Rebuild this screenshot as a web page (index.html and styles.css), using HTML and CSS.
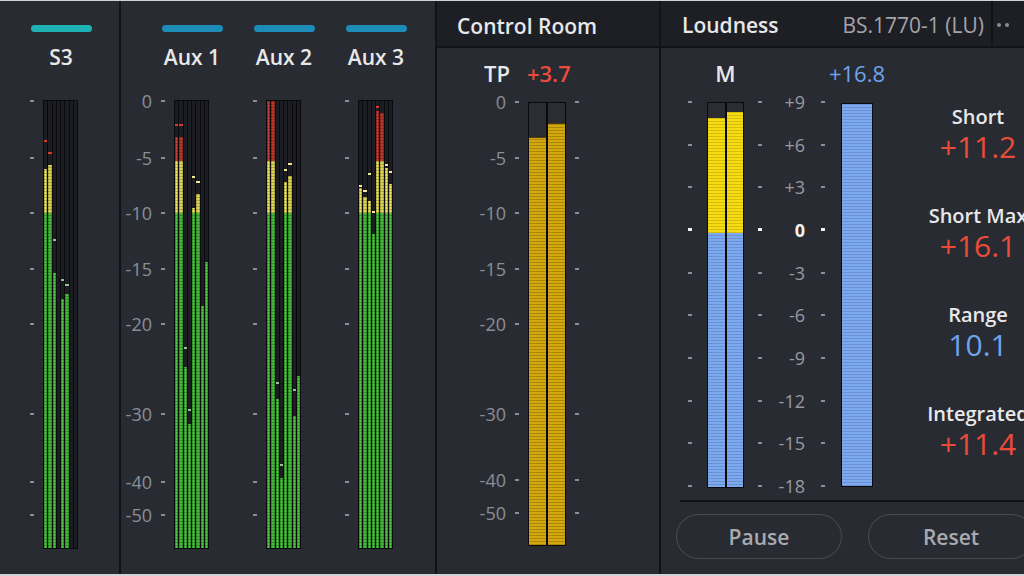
FILE: index.html
```html
<!DOCTYPE html>
<html lang="en">
<head>
<meta charset="utf-8">
<title>Meters</title>
<link rel="stylesheet" href="styles.css">
</head>
<body>
<div class="app">
  <section class="panel s3">
    <div class="strip">
      <div class="tag teal"></div>
      <div class="name">S3</div>
      <div class="mrow">
        <div class="scale">
          <div class="tk" style="top:1px"><i></i></div>
          <div class="tk" style="top:58px"><i></i></div>
          <div class="tk" style="top:113px"><i></i></div>
          <div class="tk" style="top:169px"><i></i></div>
          <div class="tk" style="top:224px"><i></i></div>
          <div class="tk" style="top:314px"><i></i></div>
          <div class="tk" style="top:382px"><i></i></div>
          <div class="tk" style="top:415px"><i></i></div>
        </div>
        <div class="meter">
          <div class="ch"><div class="off" style="height:68px"></div><b class="pk r" style="top:39px"></b></div>
          <div class="ch"><div class="off" style="height:64px"></div><b class="pk r" style="top:51px"></b></div>
          <div class="ch"><div class="off" style="height:172px"></div><b class="pk g" style="top:138px"></b></div>
          <div class="ch"><div class="off" style="height:447px"></div></div>
          <div class="ch"><div class="off" style="height:198px"></div><b class="pk g" style="top:178px"></b></div>
          <div class="ch"><div class="off" style="height:193px"></div><b class="pk g" style="top:183px"></b></div>
          <div class="ch"><div class="off" style="height:447px"></div></div>
          <div class="ch"><div class="off" style="height:447px"></div></div>
        </div>
      </div>
    </div>
  </section>

  <section class="panel aux">
    <div class="strip">
      <div class="tag blue"></div>
      <div class="name">Aux 1</div>
      <div class="mrow">
        <div class="scale">
          <div class="tk" style="top:1px"><span>0</span><i></i></div>
          <div class="tk" style="top:58px"><span>-5</span><i></i></div>
          <div class="tk" style="top:113px"><span>-10</span><i></i></div>
          <div class="tk" style="top:169px"><span>-15</span><i></i></div>
          <div class="tk" style="top:224px"><span>-20</span><i></i></div>
          <div class="tk" style="top:314px"><span>-30</span><i></i></div>
          <div class="tk" style="top:382px"><span>-40</span><i></i></div>
          <div class="tk" style="top:415px"><span>-50</span><i></i></div>
        </div>
        <div class="meter">
          <div class="ch"><div class="off" style="height:36px"></div><b class="pk r" style="top:23px"></b></div>
          <div class="ch"><div class="off" style="height:36px"></div><b class="pk r" style="top:23px"></b></div>
          <div class="ch"><div class="off" style="height:266px"></div><b class="pk g" style="top:246px"></b></div>
          <div class="ch"><div class="off" style="height:323px"></div><b class="pk g" style="top:308px"></b></div>
          <div class="ch"><div class="off" style="height:107px"></div><b class="pk y" style="top:75px"></b></div>
          <div class="ch"><div class="off" style="height:93px"></div><b class="pk y" style="top:80px"></b></div>
          <div class="ch"><div class="off" style="height:205px"></div></div>
          <div class="ch"><div class="off" style="height:161px"></div></div>
        </div>
      </div>
    </div>
    <div class="strip">
      <div class="tag blue"></div>
      <div class="name">Aux 2</div>
      <div class="mrow">
        <div class="scale">
          <div class="tk" style="top:1px"><i></i></div>
          <div class="tk" style="top:58px"><i></i></div>
          <div class="tk" style="top:113px"><i></i></div>
          <div class="tk" style="top:169px"><i></i></div>
          <div class="tk" style="top:224px"><i></i></div>
          <div class="tk" style="top:314px"><i></i></div>
          <div class="tk" style="top:382px"><i></i></div>
          <div class="tk" style="top:415px"><i></i></div>
        </div>
        <div class="meter">
          <div class="ch"><div class="off" style="height:0px"></div></div>
          <div class="ch"><div class="off" style="height:0px"></div></div>
          <div class="ch"><div class="off" style="height:298px"></div><b class="pk g" style="top:281px"></b></div>
          <div class="ch"><div class="off" style="height:377px"></div><b class="pk g" style="top:363px"></b></div>
          <div class="ch"><div class="off" style="height:81px"></div><b class="pk y" style="top:68px"></b></div>
          <div class="ch"><div class="off" style="height:75px"></div><b class="pk y" style="top:62px"></b></div>
          <div class="ch"><div class="off" style="height:315px"></div><b class="pk g" style="top:288px"></b></div>
          <div class="ch"><div class="off" style="height:275px"></div></div>
        </div>
      </div>
    </div>
    <div class="strip">
      <div class="tag blue"></div>
      <div class="name">Aux 3</div>
      <div class="mrow">
        <div class="scale">
          <div class="tk" style="top:1px"><i></i></div>
          <div class="tk" style="top:58px"><i></i></div>
          <div class="tk" style="top:113px"><i></i></div>
          <div class="tk" style="top:169px"><i></i></div>
          <div class="tk" style="top:224px"><i></i></div>
          <div class="tk" style="top:314px"><i></i></div>
          <div class="tk" style="top:382px"><i></i></div>
          <div class="tk" style="top:415px"><i></i></div>
        </div>
        <div class="meter">
          <div class="ch"><div class="off" style="height:87px"></div><b class="pk y" style="top:84px"></b></div>
          <div class="ch"><div class="off" style="height:96px"></div><b class="pk y" style="top:89px"></b></div>
          <div class="ch"><div class="off" style="height:100px"></div><b class="pk y" style="top:72px"></b></div>
          <div class="ch"><div class="off" style="height:133px"></div><b class="pk y" style="top:110px"></b></div>
          <div class="ch"><div class="off" style="height:10px"></div><b class="pk r" style="top:5px"></b></div>
          <div class="ch"><div class="off" style="height:12px"></div></div>
          <div class="ch"><div class="off" style="height:67px"></div><b class="pk y" style="top:63px"></b></div>
          <div class="ch"><div class="off" style="height:83px"></div><b class="pk y" style="top:70px"></b></div>
        </div>
      </div>
    </div>
  </section>

  <section class="panel control">
    <header class="phead">Control Room</header>
    <div class="tprow"><span>TP</span><span class="red">+3.7</span></div>
    <div class="crow">
      <div class="scale cscale">
        <div class="tk" style="top:0px"><span>0</span><i></i></div>
        <div class="tk" style="top:56px"><span>-5</span><i></i></div>
        <div class="tk" style="top:111px"><span>-10</span><i></i></div>
        <div class="tk" style="top:167px"><span>-15</span><i></i></div>
        <div class="tk" style="top:222px"><span>-20</span><i></i></div>
        <div class="tk" style="top:312px"><span>-30</span><i></i></div>
        <div class="tk" style="top:378px"><span>-40</span><i></i></div>
        <div class="tk" style="top:411px"><span>-50</span><i></i></div>
      </div>
      <div class="cmeter">
        <div class="cch"><div class="off" style="height:35px"></div></div>
        <div class="cch"><div class="off" style="height:21px"></div></div>
      </div>
      <div class="scale cscale rs">
        <div class="tk" style="top:0px"><i></i></div>
        <div class="tk" style="top:56px"><i></i></div>
        <div class="tk" style="top:111px"><i></i></div>
        <div class="tk" style="top:167px"><i></i></div>
        <div class="tk" style="top:222px"><i></i></div>
        <div class="tk" style="top:312px"><i></i></div>
        <div class="tk" style="top:378px"><i></i></div>
        <div class="tk" style="top:411px"><i></i></div>
      </div>
    </div>
  </section>

  <section class="panel loud">
    <header class="lhead">
      <span class="t">Loudness</span>
      <span class="sub">BS.1770-1 (LU)</span>
      <span class="more"><i></i><i></i></span>
    </header>
    <div class="lbody">
      <div class="ltickcol">
        <div class="lrows">
          <div class="lrow"><i></i></div>
          <div class="lrow"><i></i></div>
          <div class="lrow"><i></i></div>
          <div class="lrow zero"><i></i></div>
          <div class="lrow"><i></i></div>
          <div class="lrow"><i></i></div>
          <div class="lrow"><i></i></div>
          <div class="lrow"><i></i></div>
          <div class="lrow"><i></i></div>
          <div class="lrow"><i></i></div>
        </div>
      </div>
      <div class="lmcol">
        <div class="ltop"><span>M</span></div>
        <div class="mmeter">
          <div class="mch"><div class="off" style="height:15px"></div></div>
          <div class="mch"><div class="off" style="height:9px"></div></div>
        </div>
      </div>
      <div class="lscale">
        <div class="lrows">
          <div class="lrow"><i></i><span>+9</span><i></i></div>
          <div class="lrow"><i></i><span>+6</span><i></i></div>
          <div class="lrow"><i></i><span>+3</span><i></i></div>
          <div class="lrow zero"><i></i><span>0</span><i></i></div>
          <div class="lrow"><i></i><span>-3</span><i></i></div>
          <div class="lrow"><i></i><span>-6</span><i></i></div>
          <div class="lrow"><i></i><span>-9</span><i></i></div>
          <div class="lrow"><i></i><span>-12</span><i></i></div>
          <div class="lrow"><i></i><span>-15</span><i></i></div>
          <div class="lrow"><i></i><span>-18</span><i></i></div>
        </div>
      </div>
      <div class="lrcol">
        <div class="ltop"><span class="blue">+16.8</span></div>
        <div class="rmeter"></div>
      </div>
      <div class="stats">
        <div class="stat"><span class="k">Short</span><span class="v red">+11.2</span></div>
        <div class="stat"><span class="k">Short Max</span><span class="v red">+16.1</span></div>
        <div class="stat"><span class="k">Range</span><span class="v blue">10.1</span></div>
        <div class="stat"><span class="k">Integrated</span><span class="v red">+11.4</span></div>
      </div>
    </div>
    <div class="lsep"></div>
    <div class="lbtns">
      <button class="btn">Pause</button>
      <button class="btn">Reset</button>
    </div>
  </section>
</div>
</body>
</html>
```
FILE: styles.css
```css
* { box-sizing: border-box; margin: 0; padding: 0; }
html, body { width: 1024px; height: 576px; overflow: hidden; }
body {
  background: #d2d3d6;
  font-family: "Open Sans", "Liberation Sans", sans-serif;
  color: #e8e8ea;
}
.app {
  display: flex;
  margin-top: 1px;
  height: 573px;
  background: #292b33;
}
.panel {
  height: 100%;
  border-right: 2px solid #121317;
  overflow: hidden;
  flex: none;
}
.s3 { width: 121px; padding-left: 15px; }
.aux { width: 316px; padding-left: 25px; display: flex; }
.control { width: 224px; }
.loud { flex: 1; border-right: none; display: flex; flex-direction: column; }

/* channel strips */
.strip {
  width: 92px;
  flex: none;
  display: flex;
  flex-direction: column;
  align-items: center;
  padding-top: 24px;
}
.tag { width: 61px; height: 7px; border-radius: 4px; }
.tag.teal { background: #1fb2b4; }
.tag.blue { background: #1d8cb6; }
.name {
  margin-top: 11px;
  height: 28px;
  line-height: 28px;
  font-size: 21px;
  font-weight: 600;
  white-space: nowrap;
}
.mrow {
  margin-top: 29px;
  width: 100%;
  display: grid;
  grid-template-columns: 28px 35px 1fr;
}

/* scales */
.scale { position: relative; height: 449px; }
.tk {
  position: absolute;
  right: 9px;
  display: flex;
  align-items: center;
  gap: 9px;
  transform: translateY(-50%);
  font-size: 18px;
  line-height: 18px;
  color: #8b8e97;
  white-space: nowrap;
}
.tk i { display: block; width: 4px; height: 2px; background: #8b8e97; }
.scale.rs .tk { right: auto; left: 9px; }

/* 8-channel meters */
.meter {
  height: 449px;
  border: 1px solid #0a0a0c;
  background: #0a0a0c;
  display: flex;
  gap: 1px;
}
.ch {
  flex: 1;
  position: relative;
  background:
    repeating-linear-gradient(to bottom, rgba(0,0,0,.22) 0 1px, transparent 1px 3px),
    linear-gradient(to right, rgba(0,0,0,.3), rgba(255,255,255,.12) 50%, rgba(0,0,0,.3)),
    linear-gradient(to bottom, #c0281c 0 60px, #ebe34c 60px 112px, #38c02c 112px);
}
.off { background: #1c1d22; }
.pk { position: absolute; left: 0; right: 0; height: 2px; }
.pk.r { background: #d8392a; }
.pk.y { background: #f2ea92; }
.pk.g { background: #8fc488; }

/* control room */
.phead {
  height: 47px;
  border-bottom: 2px solid #121317;
  background: #1e1f25;
  display: flex;
  align-items: center;
  padding: 4px 0 0 20px;
  font-size: 21px;
  font-weight: 600;
  white-space: nowrap;
}
.tprow {
  display: flex;
  align-items: center;
  gap: 17px;
  padding-left: 47px;
  margin-top: 12px;
  height: 26px;
  font-size: 22px;
  font-weight: 600;
}
.red { color: #ec4b3a; }
.blue { color: #6fa3ee; }
.crow {
  margin-top: 16px;
  display: grid;
  grid-template-columns: 91px 38px 1fr;
}
.cscale { height: 444px; }
.cmeter {
  height: 444px;
  border: 1px solid #0a0a0c;
  background: #0a0a0c;
  display: flex;
  gap: 2px;
}
.cch {
  flex: 1;
  background:
    repeating-linear-gradient(to bottom, rgba(0,0,0,.2) 0 1px, transparent 1px 3px),
    #d4a70e;
}
.cch .off { background: #2c2d33; border-bottom: 1px solid #4a3a10; }

/* loudness */
.lhead {
  height: 47px;
  flex: none;
  border-bottom: 2px solid #121317;
  background: #1e1f25;
  display: flex;
  align-items: center;
  padding-left: 21px;
  font-size: 21px;
  white-space: nowrap;
}
.lhead .t { font-weight: 600; padding-top: 2px; }
.lhead .sub { margin-left: auto; padding: 2px 7px 0 0; color: #a3a4a9; }
.lhead .more {
  width: 33px;
  height: 100%;
  flex: none;
  border-left: 2px solid #121317;
  display: flex;
  align-items: center;
  gap: 4px;
  padding: 2px 0 0 4px;
}
.lhead .more i { width: 4px; height: 4px; border-radius: 50%; background: #8c8d92; }

.lbody { display: flex; height: 452px; flex: none; padding-left: 27px; }
.lrows {
  height: 400px;
  display: flex;
  flex-direction: column;
  justify-content: space-between;
}
.lrow {
  height: 16px;
  display: flex;
  align-items: center;
  font-size: 18px;
  line-height: 16px;
  color: #989aa1;
}
.lrow i { display: block; width: 4px; height: 2px; background: #8b8e97; flex: none; }
.lrow.zero { color: #f2f2f2; font-weight: 700; }
.lrow.zero i { background: #f2f2f2; height: 3px; }
.lrow span { width: 39px; margin-left: 4px; margin-right: 16px; text-align: right; white-space: nowrap; }

.ltickcol { width: 4px; flex: none; padding-top: 46px; }
.lmcol { width: 37px; flex: none; margin-left: 15px; padding-top: 12px; }
.lscale { flex: none; margin-left: 14px; padding-top: 46px; }
.lrcol { width: 32px; flex: none; margin-left: 16px; padding-top: 12px; }
.ltop {
  height: 26px;
  display: flex;
  justify-content: center;
  align-items: center;
  font-size: 22px;
  font-weight: 600;
  white-space: nowrap;
}
.lrcol .ltop { font-weight: 500; }
.mmeter {
  margin-top: 16px;
  height: 386px;
  border: 1px solid #0a0a0c;
  background: #0a0a0c;
  display: flex;
  gap: 2px;
}
.mch {
  flex: 1;
  background:
    repeating-linear-gradient(to bottom, rgba(0,0,0,.14) 0 1px, transparent 1px 3px),
    linear-gradient(to bottom, #f6dc10 0 130px, #7ca9f0 130px);
}
.mch .off { background: #2c2d33; }
.rmeter {
  margin-top: 17px;
  height: 384px;
  border: 1px solid #0a0a0c;
  background:
    repeating-linear-gradient(to bottom, rgba(0,0,0,.14) 0 1px, transparent 1px 3px),
    #7ca9f0;
}
.stats {
  width: 156px;
  flex: none;
  margin-left: 27px;
  padding-top: 56px;
  display: flex;
  flex-direction: column;
  align-items: center;
  gap: 39px;
}
.stat { display: flex; flex-direction: column; align-items: center; }
.stat .k {
  font-size: 20px;
  font-weight: 600;
  line-height: 26px;
  white-space: nowrap;
}
.stat .v { font-size: 30px; line-height: 34px; white-space: nowrap; }

.lsep { margin-left: 19px; height: 2px; background: #111214; flex: none; }
.lbtns { display: flex; gap: 26px; padding-left: 15px; margin-top: 12px; }
.btn {
  width: 166px;
  height: 45px;
  flex: none;
  border: 1.5px solid #4a4c54;
  border-radius: 23px;
  background: transparent;
  color: #a9aaaf;
  font-family: "Open Sans", "Liberation Sans", sans-serif;
  font-size: 21px;
  font-weight: 600;
}
```
